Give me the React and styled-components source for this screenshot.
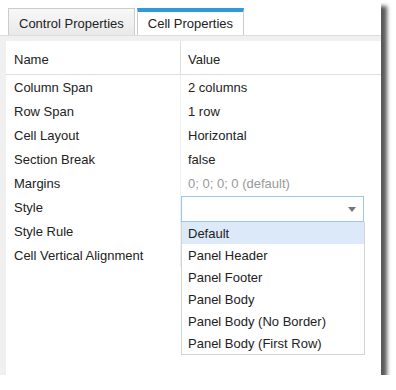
import styled, { createGlobalStyle } from "styled-components";

const GlobalStyle = createGlobalStyle`
  body {
    margin: 0;
    background: #fff;
    font-family: "Liberation Sans", Arial, sans-serif;
    font-size: 13px;
    color: #222;
  }
`;

const Frame = styled.div`
  width: 381px;
  height: 375px;
  background: #fff;
  display: flex;
  flex-direction: column;
  box-shadow: 6px 6px 4px rgba(0, 0, 0, 0.65);
`;

const TabBar = styled.div`
  display: flex;
  align-items: flex-end;
  gap: 2px;
  height: 35px;
  padding-left: 8px;
  box-sizing: border-box;
`;

const Tab = styled.div`
  height: 27px;
  box-sizing: border-box;
  padding: 0 10px;
  display: flex;
  align-items: center;
  border: 1px solid #ccc;
  border-bottom: none;
  border-top: ${(p) => (p.$active ? "4px solid #2e9bd8" : "1px solid #ccc")};
  padding-top: ${(p) => (p.$active ? "0" : "2px")};
  background: ${(p) =>
    p.$active ? "#fff" : "linear-gradient(#f8f8f8, #e9e9e9)"};
  color: #222;
  cursor: default;
`;

const Body = styled.div`
  flex: 1;
  display: flex;
  border-top: 1px solid #ddd;
  background: #f0f0f0;
  padding: 5px 0 0 6px;
`;

const Content = styled.div`
  flex: 1;
  background: #fff;
`;

const Grid = styled.div`
  display: grid;
  grid-template-columns: 174px 1fr;
`;

const HeadCell = styled.div`
  height: 33px;
  box-sizing: border-box;
  display: flex;
  align-items: center;
  padding-top: 3px;
  padding-left: ${(p) => (p.$value ? "7px" : "8px")};
  border-bottom: 1px solid #ddd;
  border-left: ${(p) => (p.$value ? "1px solid #ddd" : "none")};
  box-sizing: content-box;
  height: 30px;
`;

const Cell = styled.div`
  height: 24px;
  box-sizing: border-box;
  line-height: 24px;
  padding-top: 1px;
  white-space: nowrap;
  padding-left: ${(p) => (p.$value ? "7px" : "8px")};
  border-left: ${(p) => (p.$value ? "1px solid #f0f0f0" : "none")};
  color: ${(p) => (p.$muted ? "#999" : "#222")};
`;

const EditCell = styled.div`
  height: 24px;
  border-left: 1px solid #f0f0f0;
  position: relative;
  z-index: 1;
`;

const Select = styled.div`
  position: relative;
  width: 183px;
  margin-top: 1px;
`;

const Input = styled.div`
  height: 26px;
  box-sizing: border-box;
  border: 1px solid #9cc6ef;
  background: #fff;
  display: flex;
  align-items: center;
  justify-content: flex-end;
  padding-right: 7px;
`;

const Caret = styled.span`
  width: 0;
  height: 0;
  border-left: 4.5px solid transparent;
  border-right: 4.5px solid transparent;
  border-top: 5px solid #777;
`;

const Menu = styled.ul`
  position: absolute;
  top: 100%;
  left: 0;
  width: 184px;
  box-sizing: border-box;
  margin: 0;
  padding: 0;
  list-style: none;
  background: #fff;
  border: 1px solid #d4d4d4;
  border-top: none;
`;

const Option = styled.li`
  height: 22px;
  box-sizing: border-box;
  line-height: 22px;
  padding-top: 1px;
  padding-left: 6px;
  white-space: nowrap;
  background: ${(p) => (p.$selected ? "#dce9f9" : "transparent")};
`;

const rows = [
  ["Column Span", "2 columns"],
  ["Row Span", "1 row"],
  ["Cell Layout", "Horizontal"],
  ["Section Break", "false"],
  ["Margins", "0; 0; 0; 0 (default)", true],
];

const options = [
  "Default",
  "Panel Header",
  "Panel Footer",
  "Panel Body",
  "Panel Body (No Border)",
  "Panel Body (First Row)",
];

export default function App() {
  return (
    <>
      <GlobalStyle />
      <Frame>
        <TabBar>
          <Tab>Control Properties</Tab>
          <Tab $active>Cell Properties</Tab>
        </TabBar>
        <Body>
          <Content>
            <Grid>
              <HeadCell>Name</HeadCell>
              <HeadCell $value>Value</HeadCell>
              {rows.map(([name, value, muted]) => [
                <Cell key={name}>{name}</Cell>,
                <Cell key={name + "-v"} $value $muted={muted}>
                  {value}
                </Cell>,
              ])}
              <Cell>Style</Cell>
              <EditCell>
                <Select>
                  <Input>
                    <Caret />
                  </Input>
                  <Menu>
                    {options.map((o, i) => (
                      <Option key={o} $selected={i === 0}>
                        {o}
                      </Option>
                    ))}
                  </Menu>
                </Select>
              </EditCell>
              <Cell>Style Rule</Cell>
              <Cell $value />
              <Cell>Cell Vertical Alignment</Cell>
              <Cell $value />
            </Grid>
          </Content>
        </Body>
      </Frame>
    </>
  );
}
